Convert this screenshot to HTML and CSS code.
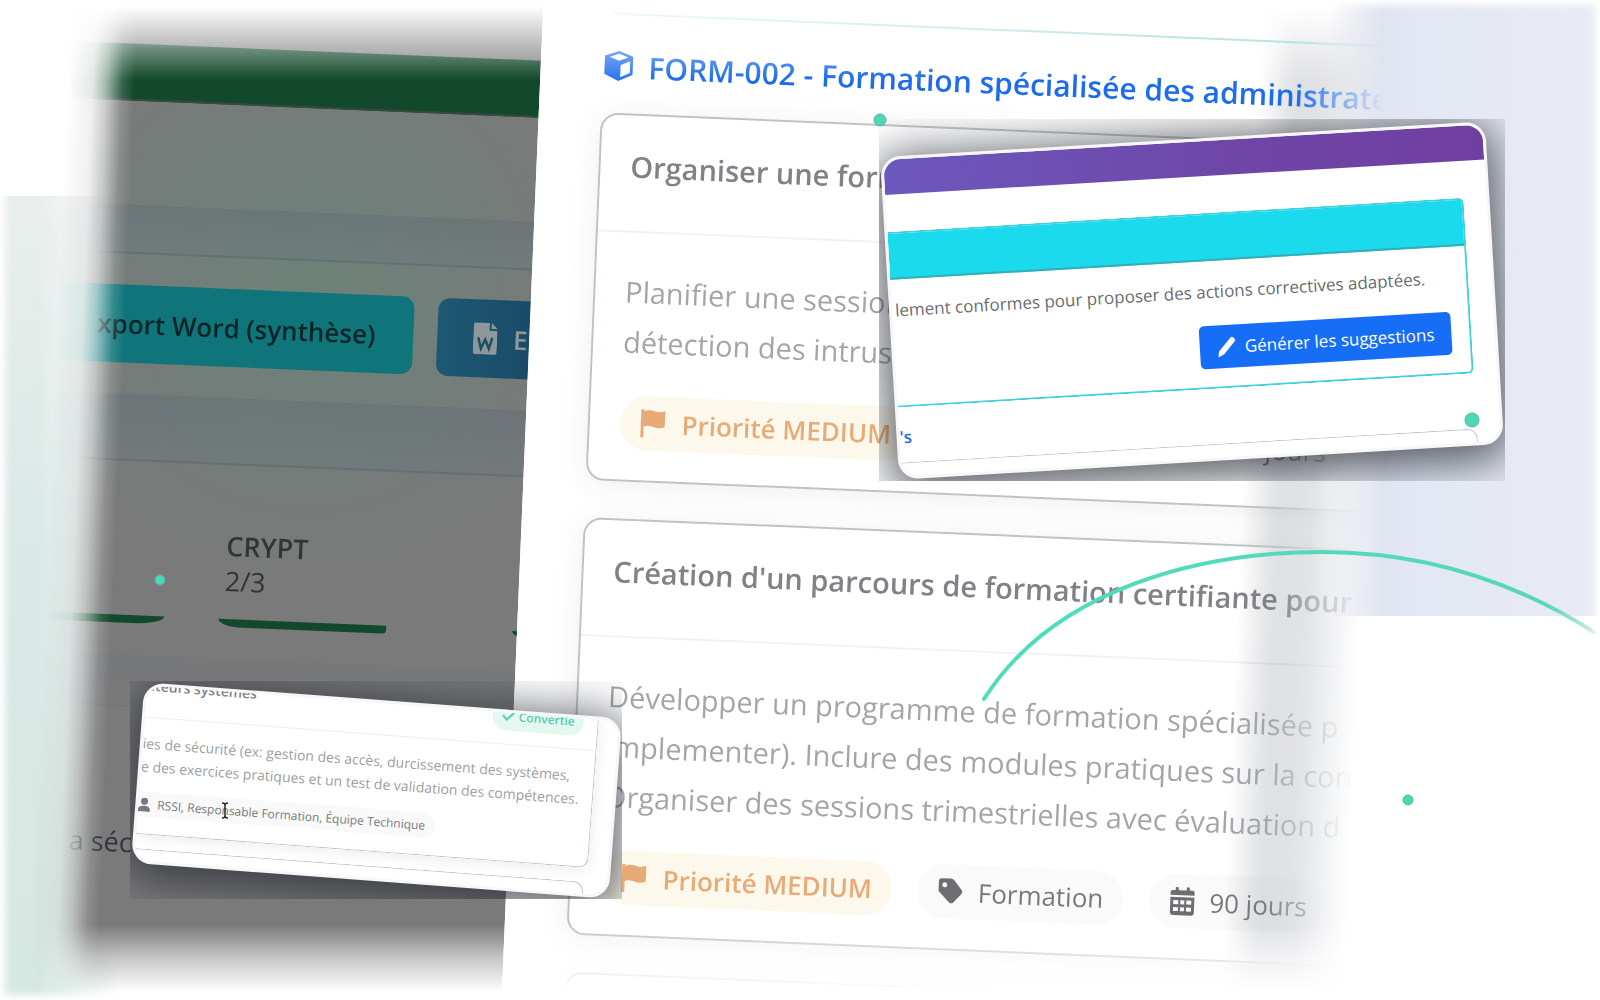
FILE: index.html
```html
<!DOCTYPE html>
<html lang="fr">
<head>
    <meta charset="UTF-8">
    <title>Formation des administrateurs</title>
    <link rel="stylesheet" href="styles.css">
</head>
<body>
    <main class="scene">
        <div class="panel panel-green"></div>
        <div class="panel panel-lavender"></div>

        <!-- Capture principale inclinée -->
        <div class="fade">
            <div class="shot">
                <section class="dashboard">
                    <div class="dash-top"></div>
                    <div class="dash-bar"></div>
                    <div class="dash-space"></div>
                    <div class="dash-band"></div>
                    <div class="dash-actions">
                        <button class="dash-btn cyan">xport Word (synthèse)</button>
                        <button class="dash-btn blue">
                            <svg width="24" height="32" viewBox="0 0 24 32"><path d="M3 0h13v8h8v21a3 3 0 0 1-3 3H3a3 3 0 0 1-3-3V3a3 3 0 0 1 3-3zm15 0l6 6h-6z" fill="#8d979c"/><path d="M5 15l3 11 4-9 4 9 3-11" fill="none" stroke="#1b4f68" stroke-width="2.5"/></svg>
                            E
                        </button>
                    </div>
                    <div class="dash-band second"></div>
                    <div class="domains">
                        <div class="domain"><div class="progress done-bar"></div></div>
                        <div class="domain">
                            <p>CRYPT</p>
                            <p>2/3</p>
                            <div class="progress"></div>
                        </div>
                        <div class="domain last"><div class="progress"></div></div>
                    </div>
                    <div class="dash-band thin"></div>
                    <p class="dash-note">a sécurité</p>
                </section>

                <section class="modal">
                    <div class="card previous"></div>
                    <h2 class="modal-title">
                        <svg width="34" height="34" viewBox="0 0 34 34"><path d="M17 1L32 6.500V26L17 33 2 26V6.500z" fill="#2b74ee"/><path d="M17 4l10 3.500-10 4L7 7.500zM19 16l10-4.500v12.500l-10 5z" fill="#fff"/></svg>
                        FORM-002 - Formation spécialisée des administrate
                    </h2>
                    <article class="card">
                        <h3>Organiser une formation</h3>
                        <div class="card-body">
                            <p>Planifier une session</p>
                            <p>détection des intrusions</p>
                            <div class="tags">
                                <span class="tag priority"><svg width="26" height="30" viewBox="0 0 26 30"><path d="M1 1h3v2c8-4 12 3 21-1v16c-9 4-13-3-21 0v11H1z" fill="#e8ab78"/></svg>Priorité MEDIUM</span>
                                <span class="tag"><svg width="26" height="28" viewBox="0 0 26 28"><path d="M2 3l12-1 11 12a3 3 0 0 1 0 4l-7 8a3 3 0 0 1-4 0L2 14z" fill="#6c6e71"/></svg>Formation</span>
                                <span class="tag"><svg width="26" height="28" viewBox="0 0 26 28"><path d="M1 4h24v22H1z" fill="#6c6e71"/></svg>90 jours</span>
                            </div>
                        </div>
                    </article>
                    <article class="card">
                        <h3>Création d'un parcours de formation certifiante pour</h3>
                        <div class="card-body">
                            <p>Développer un programme de formation spécialisée p</p>
                            <p>implementer). Inclure des modules pratiques sur la con</p>
                            <p>Organiser des sessions trimestrielles avec évaluation d</p>
                            <div class="tags">
                                <span class="tag priority"><svg width="26" height="30" viewBox="0 0 26 30"><path d="M1 1h3v2c8-4 12 3 21-1v16c-9 4-13-3-21 0v11H1z" fill="#e8ab78"/></svg>Priorité MEDIUM</span>
                                <span class="tag"><svg width="26" height="28" viewBox="0 0 26 28"><path fill-rule="evenodd" d="M4 1h9c1 0 2 .5 3 1l8 10c1 1 1 3 0 4l-8 9c-1 1-3 1-4 0L2 15c-1-1-1-2-1-3V4c0-2 1-3 3-3zm3 4a2.500 2.500 0 1 0 .1 0z" fill="#6c6e71"/></svg>Formation</span>
                                <span class="tag"><svg width="26" height="30" viewBox="0 0 26 30"><path fill-rule="evenodd" d="M6 1h3v3h8V1h3v3h3a2 2 0 0 1 2 2v3H1V6a2 2 0 0 1 2-2h3zM1 11h24v15a3 3 0 0 1-3 3H4a3 3 0 0 1-3-3zm3 3v4h5v-4zm7 0v4h4v-4zm6 0v4h5v-4zM4 21v4h5v-4zm7 0v4h4v-4zm6 0v4h5v-4z" fill="#6c6e71"/></svg>90 jours</span>
                            </div>
                        </div>
                    </article>
                    <div class="card next"></div>
                </section>
            </div>
        </div>

        <!-- Vignettes agrandies -->
        <div class="inset inset-suggest">
            <div class="inset-card">
                <div class="purple-bar"></div>
                <div class="suggest-box">
                    <div class="suggest-head"></div>
                    <div class="suggest-body">
                        <p>lement conformes pour proposer des actions correctives adaptées.</p>
                        <button class="suggest-btn"><svg width="20" height="22" viewBox="0 0 20 22"><path d="M1 21l1-6L14 2a2 2 0 0 1 3 0l1 1a2 2 0 0 1 0 3L7 18z" fill="#fff"/></svg>Générer les suggestions</button>
                    </div>
                </div>
                <a class="inset-link" href="#">'s</a>
                <div class="inset-next"></div>
            </div>
        </div>

        <div class="inset inset-detail">
            <div class="inset-card">
                <div class="detail-box">
                    <div class="detail-head">
                        <h4>ateurs systèmes</h4>
                        <span class="done"><svg width="14" height="11" viewBox="0 0 14 11"><path d="M1 5l4 4 8-8" fill="none" stroke="#5bcbb4" stroke-width="2"/></svg>Convertie</span>
                    </div>
                    <p>ies de sécurité (ex: gestion des accès, durcissement des systèmes,</p>
                    <p>e des exercices pratiques et un test de validation des compétences.</p>
                    <div class="owner"><svg width="12" height="14" viewBox="0 0 12 14"><circle cx="6" cy="3.500" r="3.500" fill="#77797d"/><path d="M0 14v-2c0-5 12-5 12 0v2z" fill="#77797d"/></svg>RSSI, Responsable Formation, Équipe Technique</div>
                </div>
                <div class="inset-next"></div>
            </div>
        </div>

        <!-- Courbe, points et curseur -->
        <svg class="marks" viewBox="0 0 1600 1000">
            <defs>
                <linearGradient id="arc" gradientUnits="userSpaceOnUse" x1="984" y1="0" x2="1596" y2="0">
                    <stop offset="0" stop-color="#50dcbd"/>
                    <stop offset="0.920" stop-color="#57d6ba"/>
                    <stop offset="1" stop-color="#d5ebe6"/>
                </linearGradient>
            </defs>
            <path d="M984 699C1055 588 1200 552 1322 552C1430 552 1520 585 1594 632" fill="none" stroke="url(#arc)" stroke-width="4" stroke-linecap="round"/>
            <g fill="#4cd8b7" stroke="#5ab39f">
                <circle cx="880" cy="120" r="6"/>
                <circle cx="1472" cy="420" r="7"/>
                <circle cx="160" cy="580" r="5"/>
                <circle cx="1408" cy="800" r="5"/>
            </g>
            <path d="M222 803q3 0 3 2v11q0 2-3 2M228 803q-3 0-3 2v11q0 2 3 2" fill="none" stroke="#222" stroke-width="1.500"/>
        </svg>
        <div class="frame"></div>
    </main>
</body>
</html>
```
FILE: styles.css
```css
* {
    margin: 0;
    padding: 0;
    box-sizing: border-box;
    font-family: 'Open Sans', 'Noto Sans', sans-serif;
}

body {
    background: #fff;
    overflow: hidden;
}

.scene {
    position: relative;
    width: 100%;
    height: 100vh;
    overflow: hidden;
    white-space: nowrap;
}

/* Fonds */
.panel {
    position: absolute;
}

.panel-green {
    left: 0;
    top: 196px;
    width: 140px;
    bottom: 0;
    background: linear-gradient(#e9eeec, #d9e9e5 45%, #d6e8e2);
    mask-image: linear-gradient(90deg, #000 38px, transparent 120px);
}

.panel-lavender {
    right: 0;
    top: 0;
    width: 280px;
    height: 616px;
    background: linear-gradient(90deg, #d6dae6, #e2e7f3 30%, #e9ebf4);
    mask-image: linear-gradient(90deg, transparent 10px, #000 64px);
}

.fade {
    position: absolute;
    inset: 0;
    mask-image: linear-gradient(transparent 6px, rgba(0, 0, 0, 0.25) 24px, rgba(0, 0, 0, 0.6) 48px, #000 80px, #000 925px, rgba(0, 0, 0, 0.4) 960px, transparent 992px);
}

/* Capture inclinée */
.shot {
    position: absolute;
    top: -80px;
    left: 0;
    width: 87%;
    height: 1160px;
    display: flex;
    overflow: hidden;
    transform: rotate(2.4deg);
    transform-origin: 0 80px;
    mask-image: linear-gradient(90deg, transparent 70px, rgba(0, 0, 0, 0.12) 96px, rgba(0, 0, 0, 0.4) 110px, rgba(0, 0, 0, 0.85) 126px, #000 138px, #000 1300px, rgba(0, 0, 0, 0.4) 1355px, transparent 1386px);
}

.dashboard {
    flex: 0 0 39%;
    overflow: hidden;
    color: #303638;
    background: radial-gradient(circle at 320px 350px, #6d8279, #767b79 230px, #7b7a7a 330px);
}

.dash-top {
    height: 118px;
    background: #868686;
}

.dash-bar {
    height: 57px;
    background: #12482b;
    border-bottom: 2px solid #38483f;
}

.dash-space {
    height: 104px;
}

.dash-band {
    height: 49px;
    background: linear-gradient(rgba(95, 106, 115, 0.4), rgba(105, 118, 126, 0.3));
    border-bottom: 2px solid rgba(90, 100, 105, 0.3);
}

.dash-actions {
    display: flex;
    gap: 24px;
    margin-left: 42px;
    padding: 31px 0;
}

.dash-btn {
    height: 78px;
    border: 0;
    border-radius: 12px;
    font-size: 26px;
    font-weight: 600;
    flex-shrink: 0;
}

.cyan {
    width: 385px;
    padding-right: 38px;
    text-align: right;
    background: #10757a;
    color: #0a2528;
}

.blue {
    display: flex;
    align-items: center;
    gap: 16px;
    width: 200px;
    padding: 0 36px;
    background: linear-gradient(90deg, #1d5873, #194a67 50%);
    color: #8d979c;
}

.second {
    height: 67px;
}

.domains {
    display: flex;
    align-items: flex-end;
    gap: 54px;
    height: 162px;
    margin-left: 22px;
    font-size: 27px;
    font-weight: 600;
    line-height: 35px;
}

.domain {
    width: 168px;
    flex-shrink: 0;
}

.domain p {
    padding-left: 5px;
}

.domain p + p {
    font-weight: 400;
}

.domain.last {
    margin-left: 72px;
}

.progress {
    height: 8px;
    margin-top: 21px;
    background: #12482b;
    border-radius: 0 0 4px 24px / 0 0 4px 8px;
}

.done-bar {
    border-radius: 0 0 32px 0 / 0 0 8px 0;
}

.dash-band.thin {
    margin-top: 32px;
    height: 52px;
    opacity: 0.35;
}

.dash-note {
    padding: 115px 0 0 104px;
    font-size: 27px;
    line-height: 40px;
}

.modal {
    position: relative;
    flex: 1;
    min-width: 0;
    overflow: hidden;
    padding-left: 62px;
    background: linear-gradient(90deg, #fff 718px, #e3e4e6 750px, #d3d5d9 790px, #dcdfe4);
}

.modal-title {
    display: flex;
    align-items: center;
    gap: 14px;
    height: 98px;
    padding-top: 4px;
    font-size: 30px;
    font-weight: 600;
    color: #1d6cec;
}

.card {
    width: 860px;
    margin-bottom: 37px;
    border: 2px solid #c0c3c6;
    border-radius: 18px;
    box-shadow: 0 4px 30px rgba(40, 50, 60, 0.08);
}

.previous {
    height: 69px;
    margin-bottom: 0;
    border-color: #70c8c8;
    box-shadow: none;
}

.next {
    height: 200px;
}

.card h3 {
    height: 117px;
    padding: 28px 30px 0;
    border-bottom: 2px solid rgba(60, 70, 80, 0.07);
    font-size: 29px;
    font-weight: 600;
    line-height: 46px;
    color: #808287;
}

.card-body {
    padding: 34px 30px 30px;
    font-size: 29px;
    line-height: 50px;
    color: #a3a5a9;
}

.tags {
    display: flex;
    gap: 26px;
    margin-top: 29px;
}

.tag {
    display: flex;
    align-items: center;
    gap: 14px;
    height: 54px;
    padding: 0 20px;
    border-radius: 27px;
    background: rgba(120, 125, 130, 0.04);
    font-size: 26px;
    color: #77797d;
}

.priority {
    gap: 16px;
    background: #fdf8ec;
    font-weight: 600;
    color: #e8ab78;
}

/* Vignettes */
.inset {
    position: absolute;
    display: flex;
    align-items: center;
    justify-content: center;
    overflow: hidden;
}

.inset-card {
    flex-shrink: 0;
    overflow: hidden;
    background: #fff;
    border: 3px solid #f7f7f8;
    border-radius: 20px;
    box-shadow: 0 8px 46px 8px rgba(35, 40, 50, 0.75);
}

.inset-suggest {
    left: 879px;
    top: 119px;
    width: 626px;
    height: 362px;
}

.inset-suggest .inset-card {
    width: 606px;
    height: 323px;
    transform: rotate(-3.4deg);
}

.purple-bar {
    height: 35px;
    background: linear-gradient(90deg, #6c58bd, #6f45a7 60%, #6f3fa0);
}

.suggest-box {
    margin: 37px 23px 0 0;
    height: 176px;
    border: 2px solid #3fd2dc;
    border-left: 0;
    border-radius: 0 6px 6px 0;
}

.suggest-head {
    height: 46px;
    background: #1cdaed;
    border-bottom: 2px solid #35aeb7;
}

.suggest-body {
    display: flex;
    flex-direction: column;
    gap: 20px;
    padding: 17px 18px 0 3px;
    font-size: 17px;
    line-height: 28px;
    color: #696c70;
}

.suggest-btn {
    display: flex;
    align-items: center;
    justify-content: center;
    align-self: flex-end;
    gap: 8px;
    width: 252px;
    height: 43px;
    border: 0;
    border-radius: 5px;
    background: #176ef6;
    color: #fff;
    font-size: 17px;
}

.inset-link {
    display: block;
    padding: 18px 0 4px;
    font-size: 17px;
    line-height: 24px;
    font-weight: 600;
    color: #1d6cec;
    text-decoration: none;
}

.inset-next {
    height: 60px;
    margin: 9px 23px 0 0;
    border: 1px solid #c0c3c6;
    border-left: 0;
    border-radius: 0 10px 0 0;
}

.inset-detail {
    left: 130px;
    top: 681px;
    width: 492px;
    height: 218px;
}

.inset-detail .inset-card {
    width: 479px;
    height: 181px;
    transform: rotate(4.3deg);
}

.detail-box {
    height: 149px;
    margin-right: 20px;
    border: 1px solid #c0c3c6;
    border-top: 0;
    border-left: 0;
    border-radius: 0 0 10px 0;
    box-shadow: 0 2px 14px rgba(40, 50, 60, 0.1);
    font-size: 14px;
    line-height: 23px;
    color: #9c9ea2;
}

.detail-head {
    display: flex;
    justify-content: space-between;
    height: 32px;
    margin-bottom: 14px;
    padding-right: 14px;
    border-bottom: 1px solid #eee;
}

.detail-head h4 {
    margin-top: -12px;
    font-size: 14px;
    font-weight: 600;
    color: #808287;
}

.done {
    display: flex;
    align-items: center;
    gap: 3px;
    height: 29px;
    margin-top: -11px;
    padding: 0 9px;
    border-radius: 14px;
    background: #e5f8ef;
    font-size: 12px;
    font-weight: 600;
    color: #5bcbb4;
}

.owner {
    display: inline-flex;
    align-items: center;
    gap: 7px;
    height: 25px;
    margin-top: 14px;
    padding: 0 10px 0 0;
    border-radius: 0 13px 13px 0;
    background: #f9f9f9;
    font-size: 12px;
    color: #77797d;
}

.inset-detail .inset-next {
    margin-top: 14px;
}

.marks {
    position: absolute;
    left: 0;
    top: 0;
    width: 100%;
}

.frame {
    position: absolute;
    inset: 0;
    box-shadow: inset 0 0 7px 5px #fff;
}
```
